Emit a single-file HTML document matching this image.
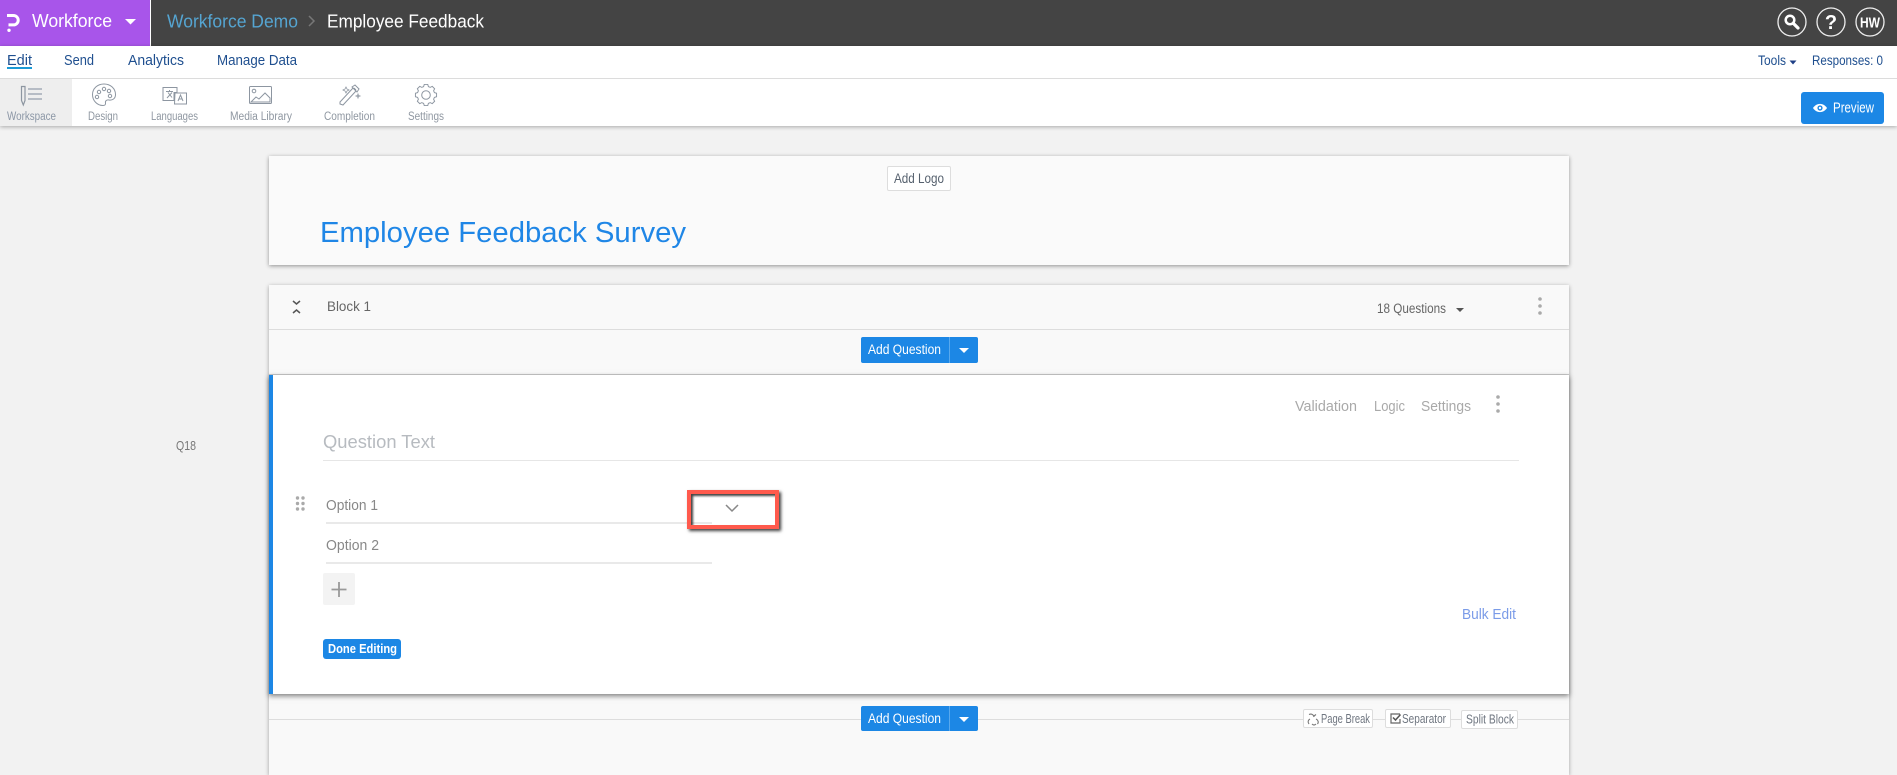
<!DOCTYPE html>
<html lang="en"><head><meta charset="utf-8"><title>Employee Feedback</title>
<style>
html,body{margin:0;padding:0;width:1897px;height:769px;overflow:hidden;background:#f2f2f2}
.b{position:absolute;box-sizing:border-box}
svg{position:absolute;left:0;top:0}
text{font-family:"Liberation Sans",sans-serif;white-space:pre}
</style></head><body>
<div class="b" style="left:0;top:0;width:1897px;height:46px;background:#444"></div>
<div class="b" style="left:0;top:0;width:150px;height:46px;background:#a855ea"></div>
<div class="b" style="left:150px;top:0;width:1px;height:46px;background:#fff"></div>
<div class="b" style="left:0;top:46px;width:1897px;height:80px;background:#fff;box-shadow:0 1px 4px rgba(0,0,0,.3)"></div>
<div class="b" style="left:0;top:78px;width:1897px;height:1px;background:#dcdcdc"></div>
<div class="b" style="left:0;top:79px;width:72px;height:47px;background:#eee"></div>
<div class="b" style="left:7px;top:67px;width:25px;height:2px;background:#1b9ad6"></div>
<div class="b" style="left:1801px;top:92px;width:83px;height:32px;background:#1c87e5;border-radius:3px"></div>

<div class="b" style="left:269px;top:156px;width:1300px;height:109px;background:#fafafa;box-shadow:0 1px 4px rgba(0,0,0,.4)"></div>
<div class="b" style="left:887px;top:166px;width:64px;height:25px;background:#fff;border:1px solid #ddd;border-radius:2px"></div>

<div class="b" style="left:269px;top:285px;width:1300px;height:490px;background:#f9f9f9;box-shadow:0 1px 4px rgba(0,0,0,.35)"></div>
<div class="b" style="left:269px;top:329px;width:1300px;height:1px;background:#ddd"></div>
<div class="b" style="left:861px;top:337px;width:117px;height:26px;background:#1c87e5;border-radius:2px"></div>
<div class="b" style="left:949px;top:337px;width:1px;height:26px;background:#58a9ee"></div>

<div class="b" style="left:269px;top:375px;width:1300px;height:319px;background:#fff;border-left:4px solid #1c87e5;box-shadow:0 2px 5px rgba(0,0,0,.5),0 -1px 0 #ccc"></div>
<div class="b" style="left:323px;top:460px;width:1196px;height:1px;background:#e6e6e6"></div>
<div class="b" style="left:326px;top:522px;width:386px;height:2px;background:#e9e9e9"></div>
<div class="b" style="left:326px;top:562px;width:386px;height:2px;background:#e9e9e9"></div>
<div class="b" style="left:323px;top:573px;width:32px;height:32px;background:#f3f3f3;border-radius:2px"></div>
<div class="b" style="left:323px;top:639px;width:78px;height:20px;background:#1c87e5;border-radius:3px"></div>
<div class="b" style="left:687px;top:490px;width:92px;height:39px;border:4px solid #ff5a4d;box-shadow:2px 2px 3px rgba(0,0,0,.75),inset 2px 2px 2px rgba(0,0,0,.75)"></div>

<div class="b" style="left:269px;top:719px;width:1300px;height:1px;background:#ddd"></div>
<div class="b" style="left:861px;top:706px;width:117px;height:25px;background:#1c87e5;border-radius:2px"></div>
<div class="b" style="left:949px;top:706px;width:1px;height:25px;background:#58a9ee"></div>
<div class="b" style="left:1303px;top:709px;width:70px;height:19px;background:#fff;border:1px solid #ddd;border-radius:2px"></div>
<div class="b" style="left:1385px;top:709px;width:66px;height:19px;background:#fff;border:1px solid #ddd;border-radius:2px"></div>
<div class="b" style="left:1461px;top:710px;width:57px;height:19px;background:#fff;border:1px solid #ddd;border-radius:2px"></div>

<svg width="1897" height="769" viewBox="0 0 1897 769">
<!-- logo -->
<path d="M7 15.500H13.500a4.700 4.700 0 0 1 0 9.400H8.500" fill="none" stroke="#fff" stroke-width="3"/>
<circle cx="9" cy="30.300" r="1.700" fill="#fff"/>
<path d="M125 19h11l-5.500 5.500z" fill="#fff"/>
<path d="M309 16l5 5-5 5" fill="none" stroke="#777" stroke-width="1.500"/>
<!-- top right -->
<g fill="none" stroke="#eee" stroke-width="1.300"><circle cx="1792" cy="22" r="14"/><circle cx="1831" cy="22" r="14"/><circle cx="1870" cy="22" r="14"/></g>
<circle cx="1790" cy="20" r="4.300" fill="none" stroke="#fff" stroke-width="2.500"/>
<path d="M1793.500 23.500l4.500 4.500" stroke="#fff" stroke-width="3.200" stroke-linecap="round"/>
<path d="M1789.500 60.500h7l-3.500 4z" fill="#1f3f86"/>
<!-- preview eye -->
<path d="M1813 108c3.500-5.500 10.500-5.500 14 0c-3.500 5.500-10.500 5.500-14 0z" fill="#fff"/>
<circle cx="1820" cy="108" r="2.600" fill="#1c87e5"/><circle cx="1820" cy="108" r="1.200" fill="#fff"/>
<!-- toolbar icons -->
<g fill="none" stroke="#8d96a1" stroke-width="1">
<path d="M21.500 86.500h3.500v14l-1.700 4.500-1.800-4.500z" stroke-width="1.200"/>
<path d="M28 89h14M28 94h14M28 99h14" stroke="#7f8a9c" stroke-width="1.100"/>
<path d="M104 84c6.500 0 11.500 4.600 11.500 10.500c0 4.500-3.500 6-6.500 5.500c-2.500-.4-4 1-3.500 3c.3 1.500-.5 2.500-2.500 2.500c-6 0-10.500-5-10.500-11c0-6 5-10.500 11.500-10.500z"/>
<circle cx="99" cy="92" r="1.700"/><circle cx="104" cy="89" r="1.700"/><circle cx="109" cy="91" r="1.700"/><circle cx="110" cy="96" r="1.700"/><circle cx="97" cy="97" r="1.700"/>
<path d="M163 87.500h14v5h-3v8h-11z"/><path d="M175 93h11.500v11h-12z"/>
<path d="M166 91.500h7M169.500 90v1.500M167 98l5-5.500M168 92.500l4 5"/><path d="M178 101l2.500-6 2.500 6M179 99h3"/>
<rect x="249.500" y="86.500" width="22" height="17" rx="1"/>
<circle cx="254" cy="91" r="1.800"/><path d="M251 102l5-5 3 2 6-6 5 5v4z"/>
<path d="M340 102l13-14 3 3-13 14-3-1z"/><path d="M352 87l3-2 4 4-2 3zM354 88l2 2"/><path d="M346 87l1 2 2 1-2 1-1 2-1-2-2-1 2-1zM358 94l.5 1.500 1.500.5-1.500.5-.5 1.500-.5-1.500-1.500-.5 1.500-.5z" stroke-width=".8"/>
<circle cx="426" cy="95" r="4.300"/>
<path d="M423.800 85h4.400l.8 2.700 2.300 1 2.500-1.300 3 3-1.300 2.500 1 2.300 2.700.8v4.400l-2.700.8-1 2.300 1.300 2.500-3 3-2.500-1.300-2.300 1-.8 2.700h-4.400l-.8-2.700-2.300-1-2.500 1.300-3-3 1.300-2.500-1-2.300-2.700-.8v-4.400l2.700-.8 1-2.300-1.300-2.500 3-3 2.500 1.300 2.300-1z" transform="translate(85.200 16.440) scale(.8)" stroke-width="1.200"/>
</g>
<!-- block header -->
<path d="M293 301l3.500 3 3.500-3M293 313l3.500-3 3.500 3" fill="none" stroke="#555" stroke-width="1.500"/>
<path d="M1456 308h8l-4 4z" fill="#555"/>
<g fill="#aaa"><circle cx="1540" cy="299" r="1.800"/><circle cx="1540" cy="306" r="1.800"/><circle cx="1540" cy="313" r="1.800"/>
<circle cx="1498" cy="397" r="1.800"/><circle cx="1498" cy="404" r="1.800"/><circle cx="1498" cy="411" r="1.800"/>
<circle cx="297.500" cy="498" r="1.700"/><circle cx="303" cy="498" r="1.700"/><circle cx="297.500" cy="503.500" r="1.700"/><circle cx="303" cy="503.500" r="1.700"/><circle cx="297.500" cy="509" r="1.700"/><circle cx="303" cy="509" r="1.700"/></g>
<path d="M726 505l6 6 6-6" fill="none" stroke="#888" stroke-width="1.500"/>
<path d="M339 582v15M331.500 589.500h15" stroke="#999" stroke-width="1.800"/>
<path d="M959 348h10l-5 5z" fill="#fff"/><path d="M959 717h10l-5 5z" fill="#fff"/>
<!-- page break/separator icons -->
<path d="M1309 714.500c2.500-1 4.500 0 5 2.500M1314 716l2-1.500M1316 719c2 1 3 3 1.500 5M1310 719c-2 1-2.500 3-1 5M1312 724c1.500 1.500 3 1 4 0" fill="none" stroke="#777" stroke-width="1.100"/>
<path d="M1400 714h-9v9h9v-4" fill="none" stroke="#666" stroke-width="1.200"/><path d="M1393 717.500l2.500 2.500 5-5.500" fill="none" stroke="#555" stroke-width="1.500"/>

<!-- text -->
<g fill="#fff" font-size="18"><text x="32" y="27" textLength="80" lengthAdjust="spacingAndGlyphs">Workforce</text>
<text x="327" y="27.500" textLength="157" lengthAdjust="spacingAndGlyphs">Employee Feedback</text></g>
<text x="167" y="27.500" font-size="18" fill="#55a5d2" textLength="131" lengthAdjust="spacingAndGlyphs">Workforce Demo</text>
<text x="1831" y="29" font-size="20" font-weight="700" fill="#fff" text-anchor="middle">?</text>
<text x="1860" y="27.500" font-size="14.500" font-weight="700" fill="#fff" textLength="20" lengthAdjust="spacingAndGlyphs">HW</text>
<g fill="#1f4f8f" font-size="14.500">
<text x="7" y="65" textLength="25" lengthAdjust="spacingAndGlyphs">Edit</text>
<text x="64" y="65" textLength="30" lengthAdjust="spacingAndGlyphs">Send</text>
<text x="128" y="65" textLength="56" lengthAdjust="spacingAndGlyphs">Analytics</text>
<text x="217" y="65" textLength="80" lengthAdjust="spacingAndGlyphs">Manage Data</text>
<text x="1758" y="65" font-size="13.500" textLength="28" lengthAdjust="spacingAndGlyphs">Tools</text>
<text x="1812" y="65" font-size="13.500" textLength="71" lengthAdjust="spacingAndGlyphs">Responses: 0</text></g>
<g fill="#8f97a1" font-size="11.500">
<text x="7" y="120" fill="#8c97a6" textLength="49" lengthAdjust="spacingAndGlyphs">Workspace</text>
<text x="88" y="120" textLength="30" lengthAdjust="spacingAndGlyphs">Design</text>
<text x="151" y="120" textLength="47" lengthAdjust="spacingAndGlyphs">Languages</text>
<text x="230" y="120" textLength="62" lengthAdjust="spacingAndGlyphs">Media Library</text>
<text x="324" y="120" textLength="51" lengthAdjust="spacingAndGlyphs">Completion</text>
<text x="408" y="120" textLength="36" lengthAdjust="spacingAndGlyphs">Settings</text></g>
<text x="1833" y="112.500" font-size="14.500" fill="#fff" textLength="41" lengthAdjust="spacingAndGlyphs">Preview</text>
<text x="894" y="183" font-size="13.500" fill="#56616e" textLength="50" lengthAdjust="spacingAndGlyphs">Add Logo</text>
<text x="320" y="242" font-size="29" fill="#1f86e6" textLength="366" lengthAdjust="spacingAndGlyphs">Employee Feedback Survey</text>
<text x="327" y="311" font-size="14" fill="#666" textLength="44" lengthAdjust="spacingAndGlyphs">Block 1</text>
<text x="1377" y="313" font-size="13.500" fill="#666" textLength="69" lengthAdjust="spacingAndGlyphs">18 Questions</text>
<g fill="#fff" font-size="13.500">
<text x="868" y="354" textLength="73" lengthAdjust="spacingAndGlyphs">Add Question</text>
<text x="868" y="723" textLength="73" lengthAdjust="spacingAndGlyphs">Add Question</text>
<text x="328" y="653" font-weight="700" font-size="13" textLength="69" lengthAdjust="spacingAndGlyphs">Done Editing</text></g>
<g fill="#a9a9a9" font-size="14.500">
<text x="1295" y="411" textLength="62" lengthAdjust="spacingAndGlyphs">Validation</text>
<text x="1374" y="411" textLength="31" lengthAdjust="spacingAndGlyphs">Logic</text>
<text x="1421" y="411" textLength="50" lengthAdjust="spacingAndGlyphs">Settings</text></g>
<text x="323" y="448" font-size="18.500" fill="#b7bbc0" textLength="112" lengthAdjust="spacingAndGlyphs">Question Text</text>
<text x="326" y="510" font-size="14.500" fill="#888" textLength="52" lengthAdjust="spacingAndGlyphs">Option 1</text>
<text x="326" y="550" font-size="14.500" fill="#888" textLength="53" lengthAdjust="spacingAndGlyphs">Option 2</text>
<text x="176" y="450" font-size="13" fill="#777" textLength="20" lengthAdjust="spacingAndGlyphs">Q18</text>
<text x="1462" y="619" font-size="14.500" fill="#7a9be8" textLength="54" lengthAdjust="spacingAndGlyphs">Bulk Edit</text>
<g fill="#6f7680" font-size="12.500">
<text x="1321" y="723" textLength="49" lengthAdjust="spacingAndGlyphs">Page Break</text>
<text x="1402" y="723" textLength="44" lengthAdjust="spacingAndGlyphs">Separator</text>
<text x="1466" y="723.500" textLength="48" lengthAdjust="spacingAndGlyphs">Split Block</text></g>
</svg>
</body></html>
